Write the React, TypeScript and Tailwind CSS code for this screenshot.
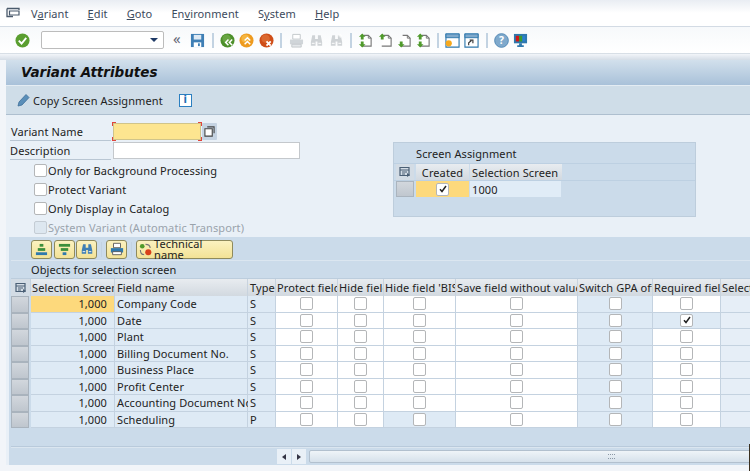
import React from "react";

const F = "[font-family:'Noto_Sans','Liberation_Sans',sans-serif]";

const Sep = ({ cls }: { cls: string }) => <div className={`w-[2px] h-[15px] bg-[#c3d3e2] shrink-0 ${cls}`} />;

const Ico = ({ children, cls = "" }: { children: React.ReactNode; cls?: string }) => (
  <svg viewBox="0 0 16 16" className={`w-[15px] h-[15px] shrink-0 ${cls}`}>{children}</svg>
);

const Page = ({ kind }: { kind: "updown" | "up" | "down" | "both" }) => (
  <>
    <path d="M6 2.5h5l3 3v8.5H4" fill="#fff" stroke="#777" strokeWidth="1.2" />
    <path d="M11 2.5v3h3" fill="none" stroke="#777" strokeWidth="1" />
    {(kind === "up" || kind === "both" || kind === "updown") && <path d="M4.5 0.5l3.5 3.5H6v3H3V4H1z" fill="#4f9a2b" />}
    {(kind === "down" || kind === "both" || kind === "updown") && <path d="M3 9h3v3h2l-3.5 3.5L1 12h2z" fill="#4f9a2b" />}
  </>
);

const Cb = ({ checked, disabled }: { checked?: boolean; disabled?: boolean }) => (
  <div className={`w-[13px] h-[13px] rounded-[2px] border-[1.5px] border-[#b4b6b8] flex items-center justify-center shrink-0 ${disabled ? "bg-[#dde7f0] border-[#c4ccd4]" : "bg-white"}`}>
    {checked && (
      <svg viewBox="0 0 10 10" className="w-[10px] h-[10px]"><path d="M2 5.2l2 2.3L8 2" fill="none" stroke="#222" strokeWidth="1.5" /></svg>
    )}
  </div>
);

const LayoutIcon = () => (
  <svg viewBox="0 0 12 12" className="w-[12px] h-[12px]">
    <path d="M1 1.5h9v8H1z" fill="none" stroke="#4a5f75" strokeWidth="1.2" />
    <path d="M1 4h9M3 6h5M3 8h3" stroke="#4a5f75" strokeWidth="1" />
    <path d="M8 7l3 2-3 2z" fill="#4a5f75" />
  </svg>
);

const Bino = ({ c, plus }: { c: string; plus?: boolean }) => (
  <>
    <path d="M3.5 2.5h3v4h3v-4h3l1.5 7v4h-5v-4.5h-2v4.500h-5v-4z" fill={c} />
    <path d="M3 11h3M10 11h3" stroke="#fff" strokeWidth="1" />
    {plus && <path d="M12 1v4M10 3h4" stroke="#fff" strokeWidth="1" />}
  </>
);

const Circle = ({ c, c2, children }: { c: string; c2: string; children: React.ReactNode }) => (
  <>
    <circle cx="8" cy="8" r="7.5" fill={c} />
    <circle cx="7" cy="6" r="4.500" fill={c2} opacity="0.45" />
    {children}
  </>
);

const grid =
  "grid grid-cols-[20px_84px_133px_28px_62px_46px_72px_122px_75px_68px_60px] w-[770px] shrink-0";

const rows: [string, string][] = [
  ["Company Code", "S"],
  ["Date", "S"],
  ["Plant", "S"],
  ["Billing Document No.", "S"],
  ["Business Place", "S"],
  ["Profit Center", "S"],
  ["Accounting Document No.", "S"],
  ["Scheduling", "P"],
];

const headers = [
  { t: "Selection Screen", c: "pl-[1px]" },
  { t: "Field name", c: "pl-[2px]" },
  { t: "Type", c: "pl-[2px]" },
  { t: "Protect field", c: "pl-[1px]" },
  { t: "Hide field", c: "pl-[1px]" },
  { t: "Hide field 'BIS'", c: "pl-[1px]" },
  { t: "Save field without values", c: "pl-[1px]" },
  { t: "Switch GPA off", c: "pl-[1px]" },
  { t: "Required field", c: "pl-[1px]" },
  { t: "Select", c: "pl-[1px]" },
];

const cellB = "border-r border-b border-[#c4d2e0]";
const blue = "bg-[#deeaf5]";

const Center = ({ bg, checked }: { bg: string; checked?: boolean }) => (
  <div className={`${cellB} ${bg} flex items-center justify-center min-h-0`}>
    <Cb checked={checked} />
  </div>
);

const YBtn = ({ children, cls }: { children: React.ReactNode; cls: string }) => (
  <div className={`h-[19px] rounded-[3px] border border-[#8f8a5c] bg-gradient-to-b from-[#fbf2c0] to-[#f3e296] flex items-center justify-center shrink-0 ${cls}`}>
    {children}
  </div>
);

function CheckRow({ label, disabled }: { label: string; disabled?: boolean }) {
  return (
    <div className="flex items-center h-[19px] pl-[28px] gap-[1px]">
      <Cb disabled={disabled} />
      <span className={disabled ? "text-[#9aa3ac]" : "text-[#222]"}>{label}</span>
    </div>
  );
}

export default function App() {
  return (
    <div className={`relative w-[750px] h-[471px] overflow-hidden flex flex-col bg-[#f2f5f9] text-[11px] leading-none tracking-[0.1px] text-[#222] ${F}`}>
      <div className="absolute right-0 top-[444px] bottom-0 w-[1px] bg-[#3a3020]" />
      {/* menu */}
      <div className="h-[27px] shrink-0 flex items-center bg-gradient-to-b from-[#e9edf3] via-white to-white border-b border-[#d3dbe4] pl-[6px]">
        <svg viewBox="0 0 14 12" className="w-[14px] h-[12px] mr-[11px] shrink-0">
          <path d="M1 1.500h12V3M1 1.500v8h6" fill="none" stroke="#4a5a6c" strokeWidth="1.300" />
          <path d="M3.500 4h9.500v4h-9.500zM3.500 4v4" fill="#fff" stroke="#4a5a6c" strokeWidth="1.200" />
        </svg>
        <div className="flex gap-[19px] text-[#3c4a5c]">
          <span>V<u>a</u>riant</span>
          <span><u>E</u>dit</span>
          <span><u>G</u>oto</span>
          <span>En<u>v</u>ironment</span>
          <span>S<u>y</u>stem</span>
          <span><u>H</u>elp</span>
        </div>
      </div>
      {/* toolbar */}
      <div className="h-[27px] shrink-0 flex items-center bg-gradient-to-b from-[#f7f9fb] to-white border-b border-[#d8dfe6] pl-[15px]">
        <Ico cls="mr-[11px]">
          <circle cx="8" cy="8" r="7.500" fill="#5a9e30" />
          <path d="M4 8.200l3 3 5-6" fill="none" stroke="#fff" strokeWidth="2" />
        </Ico>
        <div className="w-[123px] h-[18px] rounded-[2px] border-[1.5px] border-[#bcbcbc] bg-white flex items-center justify-end pr-[5px] mr-[9px] shrink-0">
          <div className="w-0 h-0 border-l-[4px] border-r-[4px] border-t-[4px] border-l-transparent border-r-transparent border-t-[#1f3a66]" />
        </div>
        <span className="w-[9px] text-[15px] leading-none text-[#667] mr-[8px] -mt-[3px]">«</span>
        <Ico cls="mr-[7px]">
          <path d="M1 1h14v14H1z" fill="#3f7fb5" />
          <path d="M4 2h8v5H4z" fill="#dfeaf4" />
          <path d="M4 10h8v5H4z" fill="#fff" />
          <path d="M8.500 11h2v3h-2z" fill="#3f7fb5" />
        </Ico>
        <Sep cls="mr-[6px]" />
        <Ico cls="mr-[4px]">
          <Circle c="#4c8f2a" c2="#8cc060">
            <path d="M9 7l-3 3 3 3M13 7l-3 3 3 3" fill="none" stroke="#fff" strokeWidth="1.600" />
          </Circle>
        </Ico>
        <Ico cls="mr-[5px]">
          <Circle c="#ee9a1e" c2="#ffd76a">
            <path d="M6 8l3-3 3 3M6 12l3-3 3 3" fill="none" stroke="#fff" strokeWidth="1.600" />
          </Circle>
        </Ico>
        <Ico cls="mr-[6px]">
          <Circle c="#cf4d17" c2="#e88a50">
            <path d="M8 9l4.500 4.500M12.500 9L8 13.500" stroke="#fff" strokeWidth="2" />
          </Circle>
        </Ico>
        <Sep cls="mr-[7px]" />
        <Ico cls="mr-[5px]">
          <path d="M4 1.500h8v5H4z" fill="#fff" stroke="#c2c7cb" />
          <path d="M1 7h14v5H1z" fill="#d0d5d9" />
          <path d="M3 12h10v3H3z" fill="#e4e7ea" stroke="#c2c7cb" />
        </Ico>
        <Ico cls="mr-[5px]"><Bino c="#cfd3d6" /></Ico>
        <Ico cls="mr-[6px]"><Bino c="#cfd3d6" plus /></Ico>
        <Sep cls="mr-[6px]" />
        <Ico cls="mr-[5px]"><Page kind="updown" /></Ico>
        <Ico cls="mr-[4px]"><Page kind="up" /></Ico>
        <Ico cls="mr-[4px]"><Page kind="down" /></Ico>
        <Ico cls="mr-[6px]"><Page kind="both" /></Ico>
        <Sep cls="mr-[6px]" />
        <Ico cls="mr-[4px]">
          <path d="M1 1h14v14H1z" fill="#fff" stroke="#2f78ad" strokeWidth="1.200" />
          <path d="M1 1h14v4H1z" fill="#7fa9cc" stroke="#2f78ad" strokeWidth="1" />
          <circle cx="4" cy="11" r="3.300" fill="#f7a81b" />
        </Ico>
        <Ico cls="mr-[7px]">
          <path d="M1 1h14v14H1z" fill="#fff" stroke="#2f78ad" strokeWidth="1.200" />
          <path d="M1 1h14v4H1z" fill="#7fa9cc" stroke="#2f78ad" strokeWidth="1" />
          <path d="M5 13v-2.500l3-2.500M6 7.500h3.500V11" fill="none" stroke="#333" strokeWidth="1.200" />
        </Ico>
        <Sep cls="mr-[6px]" />
        <Ico cls="mr-[4px]">
          <circle cx="8" cy="8" r="7.300" fill="#7fa9cc" stroke="#4f86b4" />
          <text x="8" y="12" textAnchor="middle" fontSize="11" fontWeight="700" fill="#fff">?</text>
        </Ico>
        <Ico>
          <path d="M1 1h14v10H1z" fill="#2f78ad" />
          <path d="M3 3h3.500v6H3z" fill="#d01818" />
          <path d="M6.500 3H10v6H6.500z" fill="#3b9b2e" />
          <path d="M10 3h3v6h-3z" fill="#2a7fd0" />
          <path d="M6.500 11h3v2h2v2h-7v-2h2z" fill="#2f78ad" />
        </Ico>
      </div>
      {/* gap */}
      <div className="h-[6px] shrink-0 bg-gradient-to-b from-[#f2f5f9] to-[#d5dde6]" />

      {/* main panel */}
      <div className="flex-1 min-h-0 ml-[6px] flex flex-col">
        <div className="h-[26px] shrink-0 flex items-center pl-[15px] bg-gradient-to-b from-[#d2e0ec] to-[#a9c1d9] border-b border-[#e4ecf3]">
          <span className="[font-family:'DejaVu_Sans',sans-serif] font-bold italic text-[13.500px] tracking-normal text-[#111]">Variant Attributes</span>
        </div>
        <div className="h-[29px] shrink-0 flex items-center pl-[11px] bg-[#cfdde8] border-b border-[#aebfcf]">
          <svg viewBox="0 0 14 14" className="w-[14px] h-[14px] mr-[2px] shrink-0">
            <path d="M1 13l1-4 7-7.500 3 3L5 12z" fill="#5b8fb9" stroke="#3d6f99" strokeWidth="0.800" />
          </svg>
          <span>Copy Screen Assignment</span>
          <div className="ml-[16px] w-[13px] h-[13px] border border-[#2b7fc0] bg-white flex items-center justify-center">
            <span className="[font-family:'DejaVu_Sans',sans-serif] font-bold text-[10px] text-[#1f6fb5]">i</span>
          </div>
        </div>

        {/* form */}
        <div className="h-[122px] shrink-0 flex bg-[#e9f0f7]">
          <div className="w-[387px] shrink-0 pt-[8px]">
            <div className="flex h-[19px] items-stretch">
              <div className="w-[101px] shrink-0 ml-[4px] pl-[1px] flex items-center border-b border-[#b9c6d3] h-[18px]">Variant Name</div>
              <div className="relative w-[88px] h-[17px] bg-[#fde590] border border-[#d0c48a] shrink-0 ml-[2px]">
                <div className="absolute -left-[2px] -top-[2px] w-[4px] h-[4px] border-l border-t border-[#e0443c]" />
                <div className="absolute -right-[2px] -top-[2px] w-[4px] h-[4px] border-r border-t border-[#e0443c]" />
                <div className="absolute -left-[2px] -bottom-[2px] w-[4px] h-[4px] border-l border-b border-[#e0443c]" />
                <div className="absolute -right-[2px] -bottom-[2px] w-[4px] h-[4px] border-r border-b border-[#e0443c]" />
              </div>
              <div className="ml-[1px] w-[15px] h-[17px] bg-[#c5d3e2] rounded-[1px] flex items-center justify-center">
                <svg viewBox="0 0 12 12" className="w-[11px] h-[11px]">
                  <path d="M3.500 1h7.500v7" fill="none" stroke="#444" strokeWidth="1.200" />
                  <path d="M1 3h8v8H1z" fill="#fff" stroke="#444" strokeWidth="1.200" />
                </svg>
              </div>
            </div>
            <div className="flex h-[18px] items-stretch">
              <div className="w-[101px] shrink-0 ml-[4px] flex items-center border-b border-[#b9c6d3]">Description</div>
              <div className="w-[187px] h-[17px] bg-white border-[1.500px] border-[#c4c8cc] ml-[2px]" />
            </div>
            <div className="pt-[1px]">
              <CheckRow label="Only for Background Processing" />
              <CheckRow label="Protect Variant" />
              <CheckRow label="Only Display in Catalog" />
              <CheckRow label="System Variant (Automatic Transport)" disabled />
            </div>
          </div>
          <div className="w-[303px] h-[75px] mt-[27px] bg-[#cbdbea] border border-[#bdcddc] flex flex-col">
            <div className="h-[21px] shrink-0 flex items-center pl-[22px] border-b border-[#bdd0e2]">Screen Assignment</div>
            <div className="h-[17px] shrink-0 flex border-b border-[#bdd0e2] pl-[2px]">
              <div className="w-[18px] flex items-center justify-center bg-[#d3dce5] mr-[2px]"><LayoutIcon /></div>
              <div className="w-[53px] flex items-center justify-center bg-gradient-to-b from-[#e8ecf0] to-[#d2d9e0] mr-[1px]">Created</div>
              <div className="w-[92px] flex items-center pl-[2px] bg-gradient-to-b from-[#e8ecf0] to-[#d2d9e0]">Selection Screen</div>
            </div>
            <div className="h-[16px] shrink-0 flex pl-[2px]">
              <div className="w-[18px] bg-gradient-to-b from-[#d2d7dd] to-[#c0c7cf] border border-[#aab4be] mr-[2px]" />
              <div className="w-[53px] flex items-center justify-center bg-[#fdd97c] mr-[1px]"><Cb checked /></div>
              <div className="w-[91px] flex items-center pl-[2px] bg-[#e0ecf7]">1000</div>
            </div>
          </div>
        </div>

        {/* table section */}
        <div className="h-[228px] shrink-0 flex bg-[#e9f0f7] pl-[3px]">
          <div className="flex-1 min-w-0 bg-[#cbdbea] overflow-hidden flex flex-col pl-[2px]">
            <div className="h-[23px] shrink-0 flex items-center pl-[20px] pt-[1px]">
              <YBtn cls="w-[21px] mr-[2px]">
                <svg viewBox="0 0 14 14" className="w-[13px] h-[13px]"><path d="M5 1h4v3H5z" fill="#3c8f3c" /><path d="M3 5.500h8v3H3z" fill="#3c8f3c" /><path d="M1 10h12v3H1z" fill="#2f79ad" /></svg>
              </YBtn>
              <YBtn cls="w-[21px] mr-[1px]">
                <svg viewBox="0 0 14 14" className="w-[13px] h-[13px]"><path d="M1 1h12v3H1z" fill="#3c8f3c" /><path d="M3 5.500h8v3H3z" fill="#3c8f3c" /><path d="M5 10h4v3H5z" fill="#2f79ad" /></svg>
              </YBtn>
              <YBtn cls="w-[21px] mr-[4px]">
                <svg viewBox="0 0 16 16" className="w-[14px] h-[14px]"><Bino c="#3f7fb5" /></svg>
              </YBtn>
              <Sep cls="mr-[4px] !w-[1px]" />
              <YBtn cls="w-[21px] mr-[4px]">
                <svg viewBox="0 0 16 16" className="w-[14px] h-[14px]">
                  <path d="M4 1.500h8v5H4z" fill="#fff" stroke="#555" />
                  <path d="M1 7h14v5H1z" fill="#2f79ad" />
                  <path d="M3 11h10v3.500H3z" fill="#fff" stroke="#555" />
                </svg>
              </YBtn>
              <Sep cls="mr-[4px] !w-[1px]" />
              <YBtn cls="w-[97px] justify-start pl-[2px] gap-[2px]">
                <svg viewBox="0 0 14 14" className="w-[13px] h-[13px] shrink-0">
                  <circle cx="3.500" cy="3.500" r="2.500" fill="#4f9a2b" />
                  <circle cx="10" cy="10" r="3.300" fill="#d8401a" />
                  <path d="M7 1.500c3 0 5 1.500 5 4M1.500 7.500c0 3 1.500 5 4 5" fill="none" stroke="#777" strokeWidth="1.200" />
                </svg>
                <span className="text-[#222]">Technical name</span>
              </YBtn>
            </div>
            <div className="h-[19px] shrink-0 flex items-center pl-[20px] border-t border-[#dbe6f0] border-b-[#bccddd] border-b">Objects for selection screen</div>
            <div className="h-[17px] shrink-0 w-[770px]">
              <div className={`${grid} h-full`}>
                <div className="flex items-center justify-center bg-[#d3dce5] border-r border-[#c4d2e0]"><LayoutIcon /></div>
                {headers.map((h) => (
                  <div key={h.t} className={`flex items-center whitespace-nowrap overflow-hidden bg-gradient-to-b from-[#e8ecf0] to-[#d2d9e0] border-r border-[#c8d3de] ${h.c}`}>{h.t}</div>
                ))}
              </div>
            </div>
            <div className="h-[132px] shrink-0 flex flex-col w-[770px]">
              {rows.map(([name, type], i) => (
                <div key={name} className={`${grid} flex-1 min-h-0`}>
                  <div className="bg-gradient-to-b from-[#d2d7dd] to-[#bfc6ce] border border-[#a9b3bd] mr-[2px]" />
                  <div className={`${cellB} ${i === 0 ? "bg-[#fdd97c]" : blue} flex items-center justify-end pr-[7px] -ml-[0px]`}>1,000</div>
                  <div className={`${cellB} ${blue} flex items-center pl-[2px] whitespace-nowrap`}>{name}</div>
                  <div className={`${cellB} ${blue} flex items-center pl-[2px]`}>{type}</div>
                  <Center bg="bg-white" />
                  <Center bg="bg-white" />
                  <Center bg={i === 7 ? blue : "bg-white"} />
                  <Center bg="bg-white" />
                  <Center bg={blue} />
                  <Center bg={i === 1 ? blue : "bg-white"} checked={i === 1} />
                  <div className={`${cellB} bg-[#e6eef7]`} />
                </div>
              ))}
            </div>
            <div className="h-[19px] shrink-0 border-b border-[#b9cadb]" />
            <div className="h-[18px] shrink-0 flex items-center pl-[266px] border-t border-[#dbe6f0]">
              <div className="w-[14px] h-[15px] bg-[#e9f0f7] flex items-center justify-center mr-[1px]">
                <div className="w-0 h-0 border-y-[3px] border-r-[4px] border-y-transparent border-r-[#334]" />
              </div>
              <div className="w-[14px] h-[15px] bg-[#e9f0f7] flex items-center justify-center mr-[3px]">
                <div className="w-0 h-0 border-y-[3px] border-l-[4px] border-y-transparent border-l-[#334]" />
              </div>
              <div className="flex-1 h-[13px] bg-gradient-to-b from-[#eff4f8] to-[#d6e1eb] border border-[#b2c0ce] rounded-l-[2px] flex items-center pl-[298px]">
                <div className="w-[7px] h-[5px] border-y border-dotted border-[#8a97a5]" />
              </div>
            </div>
          </div>
        </div>
      </div>
    </div>
  );
}
